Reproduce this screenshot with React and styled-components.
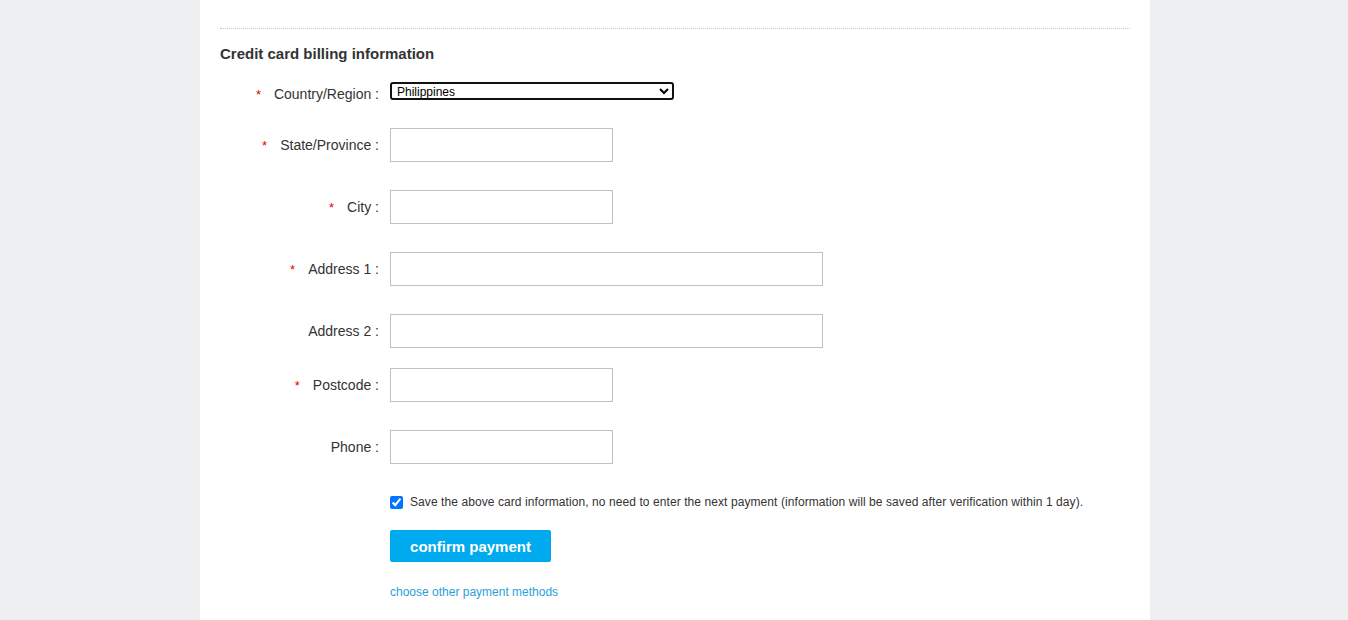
import styled, { createGlobalStyle } from 'styled-components';

const GlobalStyle = createGlobalStyle`
  body {
    margin: 0;
    background: #eeeff1;
    font-family: "Liberation Sans", Arial, sans-serif;
    color: #333;
  }
`;

const Panel = styled.div`
  width: 950px;
  margin: 0 0 0 calc(50% - 474px);
  background: #fff;
  padding: 28px 20px 20px;
  box-sizing: border-box;
  min-height: 620px;
`;

const Section = styled.div`
  border-top: 1px dotted #c8c8c8;
`;

const Title = styled.h3`
  margin: 15px 0 13px;
  font-size: 15px;
  line-height: 20px;
  font-weight: bold;
  color: #333;
`;

const Row = styled.div`
  display: flex;
  align-items: flex-start;
  margin-bottom: ${({ $gap }) => $gap}px;
`;

const Label = styled.label`
  width: 159px;
  height: 34px;
  margin-right: 11px;
  display: flex;
  align-items: center;
  justify-content: flex-end;
  font-size: 14px;
  color: #333;
  white-space: nowrap;
`;

const Star = styled.span`
  color: #e60000;
  font-size: 13px;
  margin-right: 13px;
`;

const Select = styled.select`
  width: 284px;
  height: 18px;
  margin-top: 5px;
  border: 2px solid #111;
  border-radius: 3px;
  font-size: 12px;
  font-family: "Liberation Sans", Arial, sans-serif;
  padding: 0 1px;
  background: #fff;
  color: #000;
`;

const Input = styled.input`
  width: ${({ $wide }) => ($wide ? 433 : 223)}px;
  height: 34px;
  box-sizing: border-box;
  border: 1px solid #c0c0c0;
  font-size: 14px;
  padding: 0 8px;
  outline: none;
`;

const Actions = styled.div`
  margin-left: 170px;
  padding-top: 30px;
`;

const Check = styled.label`
  display: flex;
  align-items: center;
  gap: 7px;
  font-size: 12px;
  line-height: 16px;
  letter-spacing: 0.08px;
  color: #333;

  input {
    margin: 0;
    width: 13px;
    height: 13px;
  }
`;

const Button = styled.button`
  display: block;
  margin-top: 20px;
  width: 161px;
  height: 32px;
  border: none;
  border-radius: 2px;
  background: #00aaee;
  color: #fff;
  font-size: 15px;
  font-weight: bold;
  font-family: "Liberation Sans", Arial, sans-serif;
  cursor: pointer;
`;

const Link = styled.a`
  display: block;
  margin-top: 22px;
  font-size: 12px;
  line-height: 16px;
  color: #2a9fd8;
  text-decoration: none;
`;

const fields = [
  { label: 'State/Province', required: true, gap: 28 },
  { label: 'City', required: true, gap: 28 },
  { label: 'Address 1', required: true, wide: true, gap: 28 },
  { label: 'Address 2', wide: true, gap: 20 },
  { label: 'Postcode', required: true, gap: 28 },
  { label: 'Phone', gap: 0 },
];

export default function App() {
  return (
    <>
      <GlobalStyle />
      <Panel>
        <Section>
          <Title>Credit card billing information</Title>
          <Row $gap={17}>
            <Label>
              <Star>*</Star>Country/Region :
            </Label>
            <Select defaultValue="PH">
              <option value="PH">Philippines</option>
            </Select>
          </Row>
          {fields.map((f) => (
            <Row key={f.label} $gap={f.gap}>
              <Label>
                {f.required && <Star>*</Star>}
                {f.label} :
              </Label>
              <Input $wide={f.wide} />
            </Row>
          ))}
          <Actions>
            <Check>
              <input type="checkbox" defaultChecked />
              Save the above card information, no need to enter the next payment (information will be saved after verification within 1 day).
            </Check>
            <Button>confirm payment</Button>
            <Link href="#">choose other payment methods</Link>
          </Actions>
        </Section>
      </Panel>
    </>
  );
}
